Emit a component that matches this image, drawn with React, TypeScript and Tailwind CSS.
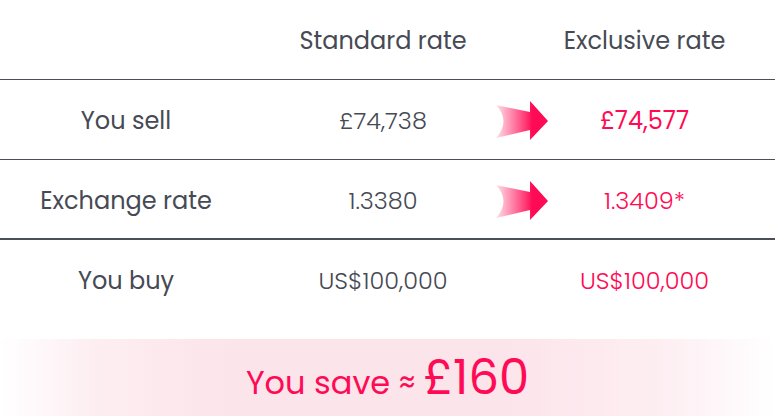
import React from "react";

const FONT = { fontFamily: '"Poppins", "Inter", "Noto Sans", sans-serif' };

function Arrow({ id }: { id: string }) {
  return (
    <svg width="54" height="40" viewBox="0 0 54 40" className="shrink-0">
      <defs>
        <linearGradient id={id} x1="0" y1="0" x2="1" y2="0">
          <stop offset="0" stopColor="#ff0a54" stopOpacity="0.12" />
          <stop offset="0.6" stopColor="#ff0a54" stopOpacity="0.85" />
          <stop offset="0.7" stopColor="#ff0a54" stopOpacity="1" />
        </linearGradient>
      </defs>
      <path d="M1 4 L35 11 L35 0 L53 20 L35 39 L35 29 L1 37 Q16 20 1 4 Z" fill={`url(#${id})`} />
    </svg>
  );
}

const rows = [
  { label: "You sell", std: "£74,738", exc: "£74,577", arrow: true, bold: true },
  { label: "Exchange rate", std: "1.3380", exc: "1.3409*", arrow: true, bold: false },
  { label: "You buy", std: "US$100,000", exc: "US$100,000", arrow: false, bold: false },
];

export default function App() {
  return (
    <div className="w-[775px] h-[416px] bg-white overflow-hidden text-[#464a54]" style={FONT}>
      {/* header */}
      <div className="grid grid-cols-[252px_262px_1fr] h-[79px] pt-[2px] items-center text-[24px]">
        <div />
        <div className="text-center">Standard rate</div>
        <div className="text-center">Exclusive rate</div>
      </div>

      {rows.map((r, i) => (
        <div
          key={r.label}
          className={`grid grid-cols-[252px_262px_1fr] items-center h-[80px] border-t border-[#4b4f58] ${i === 1 ? "border-b" : ""}`}
        >
          <div className="text-center text-[24px] pt-[3px]">{r.label}</div>
          <div className="text-center text-[24px] pt-[3px] font-light">{r.std}</div>
          <div className="relative flex items-center justify-center h-full pt-[3px]">
            {r.arrow && (
              <div className="absolute left-[-19px] top-[21px]">
                <Arrow id={`arr${i}`} />
              </div>
            )}
            <span className={`text-[24px] text-[#ff0a54] ${r.bold ? "font-normal" : "font-light"}`}>{r.exc}</span>
          </div>
        </div>
      ))}

      {/* savings banner */}
      <div className="mt-[20px] h-[77px] flex items-baseline justify-center pt-[15px] bg-[linear-gradient(to_right,#ffffff_0%,#fdeef2_12%,#fce4eb_30%,#fce4eb_65%,#fdeef2_85%,#ffffff_100%)]">
        <span className="text-[32px] text-[#ff0a54] leading-none">You save ≈</span>
        <span className="text-[48px] text-[#ff0a54] leading-none ml-[8px]">£160</span>
      </div>
    </div>
  );
}
